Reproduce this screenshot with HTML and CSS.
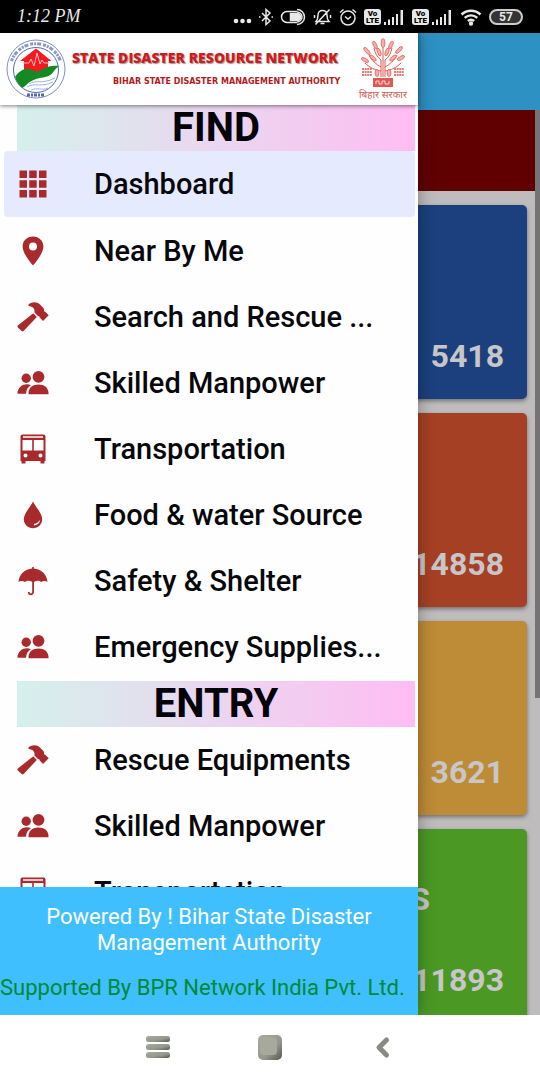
FILE: index.html
```html
<!DOCTYPE html>
<html lang="en">

<head>
    <meta charset="utf-8">
    <meta name="viewport" content="width=device-width, initial-scale=1">
    <title>State Disaster Resource Network</title>
    <link rel="stylesheet" href="styles.css">
</head>

<body>
    <!-- Icon set -->
    <svg class="sprite" aria-hidden="true">
        <symbol id="i-grid" viewBox="0 0 32 32">
            <path d="M2.500 2.500h7.500v7.500h-7.500zM12.200 2.500h7.500v7.500h-7.500zM22 2.500h7.500v7.500h-7.500zM2.500 12.200h7.500v7.500h-7.500zM12.200 12.200h7.500v7.500h-7.500zM22 12.200h7.500v7.500h-7.500zM2.500 22h7.500v7.500h-7.500zM12.200 22h7.500v7.500h-7.500zM22 22h7.500v7.500h-7.500z" />
        </symbol>
        <symbol id="i-pin" viewBox="0 0 32 32">
            <path fill-rule="evenodd" d="M16 1.500C10 1.500 5.600 5.900 5.600 11.400 5.600 19 16 30.500 16 30.500S26.400 19 26.400 11.400C26.400 5.900 22 1.500 16 1.500zM16 7.600a4 4 0 1 1 0 8 4 4 0 0 1 0-8z" />
        </symbol>
        <symbol id="i-hammer" viewBox="0 0 32 32">
            <path d="M16.300 12.200L19.800 15.900 6.600 30.100Q5.600 31 4.700 30.100L.8 26.500Q0 25.500.8 24.600z" />
            <path d="M11.500 3.400C15 .7 20 .6 23 3.600L26.600 7.300Q27.500 8.700 27 10.200L28.300 10.800 31.700 14.200 26 19.900 22.700 16.600 22.200 15.200 20.900 14.900 17.300 11.300C18.500 8.300 16 5.200 11.500 4.900z" />
        </symbol>
        <symbol id="i-people" viewBox="0 0 32 32">
            <circle cx="9.200" cy="11.300" r="4.700" />
            <circle cx="21.500" cy="9.800" r="5.900" />
            <path d="M.5 26.700C.5 20.500 5.500 17.200 9.800 17.200c1.600 0 3 .3 4.200 1-3 1.600-4.800 4.500-5 8.500z" />
            <path d="M11.500 27.300C11 20.500 16 17.500 21.500 17.500S32 20.500 31.500 27.300z" />
        </symbol>
        <symbol id="i-bus" viewBox="0 0 32 32">
            <path fill-rule="evenodd" d="M5.500 1.500h21q2 0 2 2V28h-1v2.500h-4V28h-15v2.500h-4V28h-1V3.500q0-2 2-2zM6 3.300v1.500h20V3.300zM5.500 7v10.500h9.700V7zM16.800 7v10.500h9.700V7zM8.500 20.500a2 2 0 1 0 0 4 2 2 0 0 0 0-4zM23.500 20.500a2 2 0 1 0 0 4 2 2 0 0 0 0-4z" />
        </symbol>
        <symbol id="i-drop" viewBox="0 0 32 32">
            <path d="M16 2.500C13 8.500 6.800 14.500 6.800 20.300 6.800 25.500 11 29.200 16 29.200s9.200-3.700 9.200-8.900C25.200 14.500 19 8.500 16 2.500z" />
            <path class="cut" d="M17.200 26.400c3.200-.4 5.500-2.500 6-5.700-1.700 2.400-3.200 3.700-6.300 4.300z" />
        </symbol>
        <symbol id="i-umbrella" viewBox="0 0 32 32">
            <path d="M15.200 2h1.600v1.500C24 3.900 30 9.500 30.500 17c-1.800-1.500-4.500-1.500-6.300.1-1.800-1.800-5-1.800-7.200-.2v9.900c0 4.600-6.200 4.600-6.200.2h1.800c0 2 2.600 2 2.600-.2v-9.900c-2.200-1.600-5.400-1.600-7.200.2-1.800-1.600-4.500-1.600-6.500-.1C2 9.500 8 3.900 15.200 3.500z" />
        </symbol>
        <symbol id="i-signal" viewBox="0 0 22 18">
            <path d="M1 14h2v3H1zM5 11.500h2V17H5zM9 9h2v8H9zM13 6h2v11h-2zM17.500 2h2.500v15h-2.500z" />
        </symbol>
    </svg>

    <div class="phone">
        <div class="status-bar">
            <span class="clock">1:12 PM</span>
            <div class="status-icons">
                <svg width="19" height="18" viewBox="0 0 19 18">
                    <circle cx="3" cy="13" r="2.300" />
                    <circle cx="9.500" cy="13" r="2.300" />
                    <circle cx="16" cy="13" r="2.300" />
                </svg>
                <svg class="line" width="14" height="18" viewBox="1 0 14 18">
                    <path d="M4 5l8 8-4 3.500v-15L12 5l-8 8M1 9h1.500M13.500 9H15" />
                </svg>
                <svg class="line" width="26" height="18" viewBox="0 0 26 18">
                    <path d="M17 3.500H7a5.500 5.500 0 0 0 0 11h10M17 1.500a7.500 7.500 0 0 1 0 15" />
                    <path d="M17 4a5 5 0 0 1 0 10" />
                    <path class="solid" d="M10.500 5.500H17a3.500 3.500 0 0 1 0 7h-6.500z" />
                </svg>
                <svg class="line" width="19" height="18" viewBox="0 0 19 18">
                    <path d="M3 13.500h13c-2-2-2-4-2-6.500 0-6-9-6-9 0 0 2.500 0 4.500-2 6.500zM7.500 15.500h4M1.500 7v3M17.500 7v3M16.500 1.500l-14 15" />
                </svg>
                <svg class="line" width="18" height="18" viewBox="0 0 18 18">
                    <circle cx="9" cy="10" r="7" />
                    <path d="M6 8.500L9 11l3-2.500M1 4.500l3.500-3M17 4.500l-3.500-3" />
                </svg>
                <span class="volte">Vo<br>LTE</span>
                <svg width="22" height="18"><use href="#i-signal" /></svg>
                <span class="volte">Vo<br>LTE</span>
                <svg width="22" height="18"><use href="#i-signal" /></svg>
                <svg class="line wifi" width="22" height="18" viewBox="0 0 22 18">
                    <path d="M1.500 6.500c5.500-5 13.500-5 19 0M4.700 9.800c3.700-3.300 8.900-3.300 12.600 0M7.800 13c2-1.600 4.400-1.600 6.400 0" />
                    <circle class="solid" cx="11" cy="15.500" r="1" />
                </svg>
                <span class="battery">57</span>
            </div>
        </div>

        <div class="screen">
            <!-- Dashboard behind the menu -->
            <main class="dashboard">
                <div class="app-bar"></div>
                <div class="content">
                    <div class="notice"></div>
                    <section class="card blue"><strong>5418</strong></section>
                    <section class="card red"><strong>14858</strong></section>
                    <section class="card orange"><strong>3621</strong></section>
                    <section class="card green"><h3>S</h3><strong>11893</strong></section>
                    <div class="scrollbar"></div>
                </div>
            </main>

            <!-- Side menu -->
            <aside class="drawer">
                <header class="brand">
                    <svg class="logo" viewBox="0 0 60 60">
                        <circle cx="30" cy="30" r="29" fill="#fff" stroke="#7d8fc4" stroke-width="1" />
                        <path d="M5.500 22a26 26 0 0 1 49 0" fill="none" stroke="#5468b0" stroke-width="3" stroke-dasharray="3 1 2 1 4 2" stroke-opacity=".7" />
                        <circle cx="30" cy="31" r="22.500" fill="#fff" stroke="#5468b0" stroke-width="1" />
                        <path d="M30 9.500L45.500 22H42v11H18V22h-4z" fill="#f01a20" />
                        <path d="M17 24h6l2-4 3 7 3-13 3 11 2-4 2 3h5" fill="none" stroke="#ffb9b9" stroke-width="1" />
                        <path d="M9 38c5-7 11-10 17-7 3 2 7 2 11-1 5-3 10-4 16.500-3-4 2-5 5-8 8-4 4-11 3-18 6-5 2-8 6-11 8-4-3-6-7-7.500-11z" fill="#148a23" />
                        <path d="M23 45c7-5 12 1 26-6M21 48c8-5 14 1 26-5M25 51c7-3 10 1 17-2" fill="none" stroke="#9db4dc" stroke-width="1" />
                        <path d="M21 56h18" stroke="#5468b0" stroke-width="3" stroke-dasharray="3 1 2 1" />
                    </svg>
                    <div class="brand-text">
                        <h1>STATE DISASTER RESOURCE NETWORK</h1>
                        <p>BIHAR STATE DISASTER MANAGEMENT AUTHORITY</p>
                    </div>
                    <div class="emblem">
                        <svg viewBox="0 0 44 50">
                            <g fill="none" stroke="#dc5850" stroke-width="1">
                                <path d="M22 39V7M20 39V22M24 39V22M20 29c-5-3-9-6-12-12M24 29c5-3 9-6 12-12M20 22c-4-3-6-7-7-12M24 22c4-3 6-7 7-12M20 33c-6-1-11-3-16-8M24 33c6-1 11-3 16-8" />
                            </g>
                            <g fill="#f3b0aa" stroke="#dc5850" stroke-width=".7">
                                <ellipse cx="22" cy="5" rx="2" ry="4.500" />
                                <ellipse cx="14" cy="7" rx="1.700" ry="4" transform="rotate(-25 14 7)" />
                                <ellipse cx="30" cy="7" rx="1.700" ry="4" transform="rotate(25 30 7)" />
                                <ellipse cx="6" cy="13" rx="1.700" ry="4.500" transform="rotate(-40 6 13)" />
                                <ellipse cx="38" cy="12" rx="1.700" ry="4.500" transform="rotate(45 38 12)" />
                                <ellipse cx="4" cy="22" rx="1.700" ry="4" transform="rotate(-60 4 22)" />
                                <ellipse cx="40" cy="20" rx="1.700" ry="4" transform="rotate(60 40 20)" />
                                <ellipse cx="18" cy="14" rx="1.700" ry="4" transform="rotate(-20 18 14)" />
                                <ellipse cx="26" cy="14" rx="1.700" ry="4" transform="rotate(20 26 14)" />
                                <ellipse cx="12" cy="20" rx="1.700" ry="4" transform="rotate(-50 12 20)" />
                                <ellipse cx="32" cy="20" rx="1.700" ry="4" transform="rotate(50 32 20)" />
                                <ellipse cx="16" cy="35" rx="2" ry="3.500" />
                                <ellipse cx="28" cy="35" rx="2" ry="3.500" />
                            </g>
                            <path d="M1 31h10M1 34h10M1 37h10M33 31h10M33 34h10M33 37h10" stroke="#dc5850" stroke-width="1.800" stroke-dasharray="2 .6" stroke-opacity=".8" />
                            <path d="M12 40h20v9H12z" fill="#dc5850" />
                            <path d="M15 46v-3h3v3h3v-3h3v3h4v-3" fill="none" stroke="#fbd6d2" stroke-width="1" />
                        </svg>
                        <span lang="hi">बिहार सरकार</span>
                    </div>
                </header>

                <nav class="menu">
                    <h2>FIND</h2>
                    <ul>
                        <li><a href="#dashboard" class="active"><svg><use href="#i-grid" /></svg><span>Dashboard</span></a></li>
                        <li><a href="#near"><svg><use href="#i-pin" /></svg><span>Near By Me</span></a></li>
                        <li><a href="#search"><svg><use href="#i-hammer" /></svg><span>Search and Rescue ...</span></a></li>
                        <li><a href="#manpower"><svg><use href="#i-people" /></svg><span>Skilled Manpower</span></a></li>
                        <li><a href="#transport"><svg><use href="#i-bus" /></svg><span>Transportation</span></a></li>
                        <li><a href="#food"><svg><use href="#i-drop" /></svg><span>Food &amp; water Source</span></a></li>
                        <li><a href="#shelter"><svg><use href="#i-umbrella" /></svg><span>Safety &amp; Shelter</span></a></li>
                        <li><a href="#supplies"><svg><use href="#i-people" /></svg><span>Emergency Supplies...</span></a></li>
                    </ul>
                    <h2>ENTRY</h2>
                    <ul>
                        <li><a href="#add-equipment"><svg><use href="#i-hammer" /></svg><span>Rescue Equipments</span></a></li>
                        <li><a href="#add-manpower"><svg><use href="#i-people" /></svg><span>Skilled Manpower</span></a></li>
                        <li><a href="#add-transport"><svg><use href="#i-bus" /></svg><span>Transportation</span></a></li>
                    </ul>
                </nav>

                <footer class="credits">
                    <p>Powered By ! Bihar State Disaster Management Authority</p>
                    <p class="support">Supported By BPR Network India Pvt. Ltd.</p>
                </footer>
            </aside>
        </div>

        <div class="nav-bar">
            <button type="button" aria-label="Recent apps">
                <svg width="26" height="26" viewBox="0 0 26 26">
                    <defs>
                        <linearGradient id="stone" x1="0" y1="0" x2="1" y2="1">
                            <stop offset="0" stop-color="#a9aca0" />
                            <stop offset=".6" stop-color="#92968b" />
                            <stop offset="1" stop-color="#555852" />
                        </linearGradient>
                    </defs>
                    <g fill="url(#stone)">
                        <rect x="1" y="1" width="24" height="6" rx="2.500" />
                        <rect x="1" y="9" width="24" height="6" rx="2.500" />
                        <rect x="1" y="17" width="24" height="6" rx="2.500" />
                    </g>
                </svg>
            </button>
            <button type="button" aria-label="Home">
                <svg width="26" height="26" viewBox="0 0 26 26">
                    <rect x="1" y="0" width="24" height="25" rx="5" fill="url(#stone)" />
                    <rect x="3" y="2" width="17" height="18" rx="4" fill="#a6a99b" />
                </svg>
            </button>
            <button type="button" aria-label="Back">
                <svg width="26" height="26" viewBox="0 0 26 26">
                    <path d="M17.500 5L10 12.500l7.500 7.500" fill="none" stroke="#878b84" stroke-width="5" stroke-linecap="round" stroke-linejoin="round" />
                </svg>
            </button>
        </div>
    </div>
</body>

</html>
```
FILE: styles.css
```css
* {
    box-sizing: border-box;
}

body {
    margin: 0;
    font-family: Roboto, sans-serif;
    background-color: #fff;
}

h1,
h2,
h3,
p,
ul {
    margin: 0;
    padding: 0;
}

.sprite {
    position: absolute;
    width: 0;
    height: 0;
}

.phone {
    display: flex;
    flex-direction: column;
    height: 100vh;
    overflow: hidden;
}

/* Status bar */
.status-bar {
    display: flex;
    flex: none;
    align-items: center;
    justify-content: space-between;
    height: 33px;
    padding: 0 17px;
    background-color: #000;
    color: #e8e8e8;
}

.clock {
    font-family: "Liberation Serif", serif;
    font-size: 18px;
    font-style: italic;
}

.status-icons {
    display: flex;
    align-items: center;
    gap: 7px;
}

.status-icons svg {
    fill: #e8e8e8;
}

.status-icons .line {
    fill: none;
    stroke: #e8e8e8;
    stroke-width: 1.5;
}

.status-icons .wifi {
    stroke-width: 2.4;
}

.status-icons .solid {
    fill: #e8e8e8;
}

.volte {
    width: 17px;
    padding: 1px 0;
    border-radius: 3px;
    background-color: #e8e8e8;
    color: #000;
    font-size: 8px;
    font-weight: 900;
    line-height: 7px;
    text-align: center;
}

.volte + svg {
    margin-left: -5px;
}

.battery {
    width: 34px;
    border: 2px solid #ccc;
    border-radius: 8px;
    background-color: #333;
    font-size: 12px;
    font-weight: bold;
    line-height: 12px;
    text-align: center;
}

/* Dashboard */
.screen {
    position: relative;
    flex: 1;
    min-height: 0;
    overflow: hidden;
}

.dashboard {
    display: flex;
    flex-direction: column;
    height: 100%;
    background-color: #bebcbd;
}

.app-bar {
    flex: none;
    height: 77px;
    background-color: #2d91c3;
}

.content {
    position: relative;
    flex: 1;
    min-height: 0;
    overflow: hidden;
}

.notice {
    height: 81px;
    margin-right: 5px;
    background-color: #600000;
}

.card {
    display: flex;
    flex-direction: column;
    justify-content: flex-end;
    height: 194px;
    margin: 14px 13px 0;
    padding: 0 23px 24px;
    border-radius: 5px;
    box-shadow: 0 2px 4px rgba(0, 0, 0, 0.4);
    color: #c8c6c8;
    font-size: 32px;
    line-height: 38px;
    text-align: right;
}

.card h3 {
    margin-bottom: 43px;
    padding-right: 74px;
    font-size: 32px;
}

.blue {
    background-color: #1b407d;
}

.red {
    background-color: #a64024;
}

.orange {
    background-color: #be8b36;
}

.green {
    background-color: #4b9825;
}

.scrollbar {
    position: absolute;
    top: 0;
    right: 0;
    width: 5px;
    height: 65%;
    background-color: #747474;
}

/* Side menu */
.drawer {
    position: absolute;
    top: 0;
    bottom: 0;
    left: 0;
    display: flex;
    flex-direction: column;
    width: 77.4%;
    background-color: #fefefe;
    box-shadow: 0 0 16px rgba(0, 0, 0, 0.35);
}

.brand {
    position: relative;
    display: flex;
    flex: none;
    align-items: center;
    height: 72px;
    padding: 0 10px 0 6px;
    background-color: #fff;
    box-shadow: 0 1px 4px rgba(0, 0, 0, 0.5);
}

.logo {
    flex: none;
    width: 60px;
    height: 60px;
}

.brand-text {
    flex: 1;
    min-width: 0;
    padding: 4px 0 0 6px;
    white-space: nowrap;
}

.brand-text h1 {
    color: #cf1b20;
    font-family: "Open Sans", sans-serif;
    font-size: 14px;
    font-weight: 800;
    line-height: 22px;
    text-shadow: 1px 1px 1px #999;
}

.brand-text p {
    padding-left: 41px;
    color: #b01c1c;
    font-family: "DejaVu Sans", sans-serif;
    font-size: 8px;
    font-weight: bold;
    line-height: 26px;
}

.emblem {
    display: flex;
    flex: none;
    flex-direction: column;
    align-items: center;
    width: 50px;
    color: #d4605a;
    font-family: "Noto Sans", sans-serif;
    font-size: 10px;
    line-height: 12px;
    white-space: nowrap;
}

.emblem svg {
    width: 44px;
    height: 50px;
}

.menu {
    flex: 1;
    min-height: 0;
    overflow: hidden;
}

.menu h2 {
    margin: 0 3px 0 17px;
    background-image: linear-gradient(to right, #d5f0ec, #ffbdf3);
    color: #05030a;
    font-size: 40px;
    line-height: 46px;
    text-align: center;
}

.menu ul {
    list-style: none;
}

.menu ul:first-of-type {
    padding-bottom: 1px;
}

.menu a {
    display: flex;
    align-items: center;
    height: 66px;
    margin: 0 3px 0 4px;
    padding: 0 13px;
    border-radius: 4px;
    color: #08080c;
    font-size: 29px;
    font-weight: 500;
    line-height: 34px;
    text-decoration: none;
    white-space: nowrap;
}

.menu a.active {
    margin-bottom: 1px;
    background-color: #e5eafe;
}

.menu svg {
    flex: none;
    width: 32px;
    height: 32px;
    margin-right: 45px;
    fill: #a92a2c;
}

.cut {
    fill: #fff;
}

.credits {
    flex: none;
    height: 128px;
    padding-top: 17px;
    background-color: #40bfff;
    color: #fff;
    font-size: 22px;
    line-height: 26px;
    text-align: center;
}

.credits p {
    padding: 0 40px;
}

.credits .support {
    padding: 19px 0 0;
    color: #008a35;
    text-align: left;
    white-space: nowrap;
}

/* System navigation */
.nav-bar {
    display: flex;
    flex: none;
    align-items: center;
    justify-content: center;
    gap: 86px;
    height: 65px;
    background-color: #fff;
}

.nav-bar button {
    display: flex;
    padding: 0;
    border: none;
    background: none;
    cursor: pointer;
}
```
